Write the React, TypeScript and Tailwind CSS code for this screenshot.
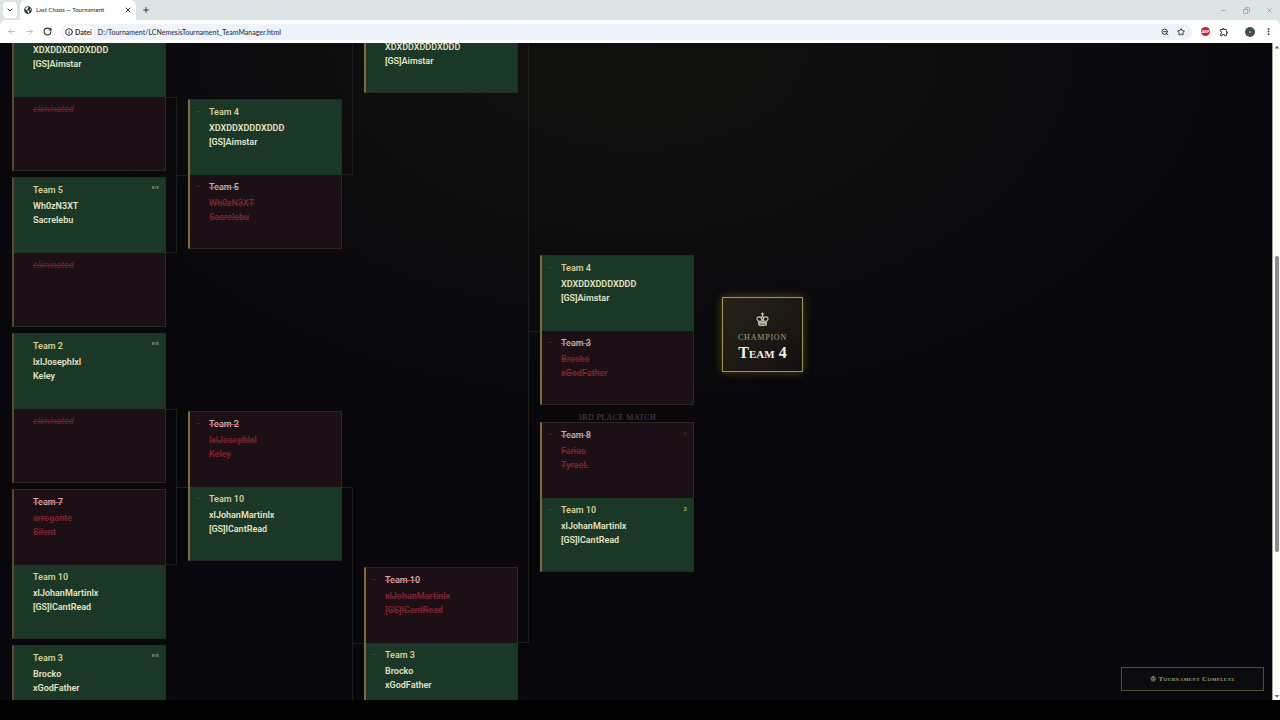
import {
  ArrowLeft,
  ArrowRight,
  ChevronDown,
  Copy,
  EllipsisVertical,
  Info,
  Minus,
  Plus,
  RotateCw,
  Star,
  X,
  ZoomOut,
} from "lucide-react";
import { FaCaretDown, FaCaretUp, FaGlobeAmericas } from "react-icons/fa";
import { MdOutlineExtension } from "react-icons/md";

interface Team {
  name?: string;
  players: string[];
  won: boolean;
  score?: string;
  seed?: boolean;
}

type MatchData = [Team, Team];

const out: Team = { players: [], won: false };
const empty: Team = { name: "", players: [], won: false };

const roundOne: MatchData[] = [
  [{ name: "", players: ["XDXDDXDDDXDDD", "[GS]Aimstar"], won: true }, out],
  [{ name: "Team 5", players: ["Wh0zN3XT", "Sacrelebu"], won: true, score: "BYE" }, out],
  [{ name: "Team 2", players: ["lxlJosephlxl", "Keley"], won: true, score: "BYE" }, out],
  [
    { name: "Team 7", players: ["arrogante", "Silent"], won: false },
    { name: "Team 10", players: ["xlJohanMartinlx", "[GS]lCantRead"], won: true },
  ],
  [{ name: "Team 3", players: ["Brocko", "xGodFather"], won: true, score: "BYE" }, empty],
];

const roundTwo: MatchData[] = [
  [
    { name: "Team 4", players: ["XDXDDXDDDXDDD", "[GS]Aimstar"], won: true, seed: true },
    { name: "Team 5", players: ["Wh0zN3XT", "Sacrelebu"], won: false, seed: true },
  ],
  [
    { name: "Team 2", players: ["lxlJosephlxl", "Keley"], won: false, seed: true },
    { name: "Team 10", players: ["xlJohanMartinlx", "[GS]lCantRead"], won: true, seed: true },
  ],
];

const semiFinals: MatchData[] = [
  [empty, { name: "", players: ["XDXDDXDDDXDDD", "[GS]Aimstar"], won: true }],
  [
    { name: "Team 10", players: ["xlJohanMartinlx", "[GS]lCantRead"], won: false, seed: true },
    { name: "Team 3", players: ["Brocko", "xGodFather"], won: true, seed: true },
  ],
];

const final: MatchData = [
  { name: "Team 4", players: ["XDXDDXDDDXDDD", "[GS]Aimstar"], won: true, seed: true },
  { name: "Team 3", players: ["Brocko", "xGodFather"], won: false, seed: true },
];

const thirdPlace: MatchData = [
  { name: "Team 8", players: ["Farias", "TyraeL"], won: false, score: "0", seed: true },
  { name: "Team 10", players: ["xlJohanMartinlx", "[GS]lCantRead"], won: true, score: "2", seed: true },
];

function TeamRow({ team }: { team: Team }) {
  return (
    <div
      className={`flex h-[75px] shrink-0 px-[6px] pt-[5px] ${
        team.won ? "bg-[#1b3728]" : "bg-[#1c0f15]"
      }`}
    >
      <div className="w-[13px] shrink-0 pt-[6px]">
        {team.seed && (
          <div className={`h-px w-1 ${team.won ? "bg-[#2c4a38]" : "bg-[#35252a]"}`} />
        )}
      </div>
      {team.name !== undefined ? (
        <div className="min-w-0 grow">
          <h3
            className={`h-[15px] text-[9px] leading-[15px] font-semibold ${
              team.won ? "text-[#d9cf91]" : "text-[#c3b3ad] line-through decoration-[#b4575a]"
            }`}
          >
            {team.name}
          </h3>
          <ul
            className={`mt-px text-[9px] leading-[14px] ${
              team.won
                ? "font-semibold text-[#e4e3c4]"
                : "font-medium text-[#84272f] line-through decoration-[#64202a]"
            }`}
          >
            {team.players.map((player) => (
              <li key={player}>{player}</li>
            ))}
          </ul>
        </div>
      ) : (
        <p className="grow text-[9px] leading-[15px] text-[#72222a] italic line-through">eliminated</p>
      )}
      {team.score && (
        <span
          className={`pt-[2px] font-bold ${
            team.score.length > 1
              ? "text-[4px] leading-[6px] text-[#7e9272]"
              : team.won
              ? "text-[6px] leading-2 text-[#a9b274]"
              : "text-[6px] leading-2 text-[#3a242a]"
          }`}
        >
          {team.score}
        </span>
      )}
    </div>
  );
}

function Match({ teams, bright }: { teams: MatchData; bright?: boolean }) {
  return (
    <article
      className={`flex h-[150px] w-[154px] shrink-0 flex-col overflow-hidden border border-l-2 border-[#29291f] ${
        bright ? "border-l-[#80693a]" : "border-l-[#574a2f]"
      }`}
    >
      <TeamRow team={teams[0]} />
      <TeamRow team={teams[1]} />
    </article>
  );
}

// Joins two matches on the left with the one they feed on the right
function Connector({ height }: { height: string }) {
  return (
    <div className={`flex w-full shrink-0 items-center ${height}`}>
      <div className="h-full w-1/2 border-y border-r border-[#1d1e19]" />
      <div className="h-px w-1/2 bg-[#1d1e19]" />
    </div>
  );
}

function Crown() {
  return (
    <svg viewBox="0 0 24 26" className="h-[14px] w-[13px]" fill="none" stroke="#cfccb8" strokeWidth="2">
      <path d="M12 1v7M9.5 3.5h5" />
      <path d="M12 17c-1-5-3-8-6-8s-5 2.500-4 5 3 3 3.500 4M12 17c1-5 3-8 6-8s5 2.500 4 5-3 3-3.500 4M12 17c-3-4-2-8 0-9 2 1 3 5 0 9" />
      <path d="M5 17.500c4-1.500 10-1.500 14 0V24c-4 1.200-10 1.200-14 0zM5 21c4-1.500 10-1.500 14 0" fill="#77745f" />
    </svg>
  );
}

function BrowserBar() {
  return (
    <header className="shrink-0 bg-[#dde4e6] font-[Lato,sans-serif] text-[#30343a]">
      <div className="flex h-5 items-center pl-[3px]">
        <button aria-label="Search tabs" className="flex h-4 w-[14px] items-center justify-center rounded bg-white">
          <ChevronDown size={8} strokeWidth={3} />
        </button>
        <div className="ml-[3px] flex h-full w-[116px] items-center rounded-t-md bg-white px-1">
          <FaGlobeAmericas size={8} className="shrink-0" />
          <span className="ml-1 grow text-[6px] leading-3 font-medium whitespace-nowrap">
            Last Chaos — Tournament
          </span>
          <button aria-label="Close tab">
            <X size={8} strokeWidth={3} />
          </button>
        </div>
        <button aria-label="New tab" className="ml-[6px]">
          <Plus size={8} strokeWidth={3} />
        </button>
        <div className="mr-[7px] ml-auto flex items-center gap-4 text-[#7d8386]">
          <button aria-label="Minimize">
            <Minus size={7} />
          </button>
          <button aria-label="Restore">
            <Copy size={7} className="-scale-x-100" />
          </button>
          <button aria-label="Close">
            <X size={7} />
          </button>
        </div>
      </div>
      <div className="flex h-[23px] items-center rounded-t-md bg-white px-[7px]">
        <div className="flex gap-[9px]">
          <button aria-label="Back" className="text-[#a6a9ac]">
            <ArrowLeft size={9} />
          </button>
          <button aria-label="Forward" className="text-[#a6a9ac]">
            <ArrowRight size={9} />
          </button>
          <button aria-label="Reload">
            <RotateCw size={9} strokeWidth={3} />
          </button>
        </div>
        <div className="ml-[9px] flex h-4 grow items-center rounded-full bg-[#eef3f9] pr-[7px] pl-[2px]">
          <span className="flex h-3 items-center gap-[2px] rounded-full bg-white px-[2px] text-[7px] leading-3 font-bold">
            <Info size={8} strokeWidth={3} />
            Datei
          </span>
          <input
            aria-label="Address"
            defaultValue="D:/Tournament/LCNemesisTournament_TeamManager.html"
            className="ml-1 min-w-0 grow bg-transparent text-[7px] leading-3 font-medium outline-none"
          />
          <div className="flex gap-2">
            <button aria-label="Zoom">
              <ZoomOut size={8} strokeWidth={3} />
            </button>
            <button aria-label="Bookmark">
              <Star size={8} strokeWidth={3} />
            </button>
          </div>
        </div>
        <div className="ml-[9px] flex items-center">
          <button
            aria-label="Ad blocker"
            className="flex size-[9px] items-center justify-center rounded-full bg-[#c8203f] text-[4px] leading-none font-bold text-white"
          >
            ABP
          </button>
          <button aria-label="Extensions" className="ml-[9px]">
            <MdOutlineExtension size={10} />
          </button>
          <button
            aria-label="Profile"
            className="ml-4 flex size-[10px] items-center justify-center rounded-full bg-[#3e5150]"
          >
            <span className="size-[2px] rounded-full bg-[#d6a24c]" />
          </button>
          <button aria-label="Menu" className="ml-[9px]">
            <EllipsisVertical size={9} strokeWidth={3} />
          </button>
        </div>
      </div>
    </header>
  );
}

export default function App() {
  return (
    <div className="flex h-screen flex-col overflow-hidden bg-black font-[Roboto,sans-serif]">
      <BrowserBar />

      <div className="mb-5 flex min-h-0 grow">
        <main className="relative flex min-w-0 grow items-start overflow-hidden bg-[#08080c] bg-radial-[ellipse_50%_60%_at_50%_0%] from-[#11110f] to-[#08080c] pl-3">
          <section aria-label="Round 1" className="-mt-[22px] flex flex-col gap-[6px]">
            {roundOne.map((teams, i) => (
              <Match key={i} teams={teams} />
            ))}
          </section>
          <div className="mt-[54px] flex w-[22px] shrink-0 flex-col gap-[156px]">
            <Connector height="h-[156px]" />
            <Connector height="h-[156px]" />
            <Connector height="h-[156px]" />
          </div>

          <section aria-label="Round 2" className="mt-14 flex flex-col gap-[162px]">
            {roundTwo.map((teams, i) => (
              <Match key={i} teams={teams} bright />
            ))}
          </section>
          <div className="-mt-[180px] flex w-[22px] shrink-0 flex-col gap-[312px]">
            <Connector height="h-[312px]" />
            <Connector height="h-[312px]" />
          </div>

          <section aria-label="Semifinals" className="-mt-[100px] flex flex-col gap-[474px]">
            {semiFinals.map((teams, i) => (
              <Match key={i} teams={teams} bright />
            ))}
          </section>
          <div className="-mt-6 flex w-[22px] shrink-0 flex-col">
            <Connector height="h-[624px]" />
          </div>

          <section aria-label="Final" className="mt-[212px] flex flex-col">
            <Match teams={final} bright />
            <h2 className="h-[17px] pt-2 text-center font-['Liberation_Serif',serif] text-[8px] leading-[10px] tracking-wider text-[#4a4943]">
              3RD PLACE MATCH
            </h2>
            <Match teams={thirdPlace} bright />
          </section>

          <section
            aria-label="Champion"
            className="mt-[254px] ml-7 flex h-[75px] w-[81px] shrink-0 flex-col items-center border border-[#a3935a] bg-linear-135 from-[#28221b] to-[#12100f] pt-[14px] font-['Liberation_Serif',serif] shadow-[0_0_8px_#7c6a2099]"
          >
            <Crown />
            <p className="mt-[7px] text-[8px] leading-[10px] tracking-widest text-[#aaa078]">CHAMPION</p>
            <p className="text-[16px] leading-5 font-bold text-[#f1efe4] [font-variant-caps:small-caps]">
              Team 4
            </p>
          </section>

          <div className="absolute right-2 bottom-[9px] flex h-6 w-[143px] items-center justify-center gap-[2px] border border-[#554d38] bg-[#0b0b0d] font-['Liberation_Serif',serif] text-[7px] leading-3 font-bold tracking-wider text-[#a0966f] [font-variant-caps:small-caps]">
            ♔ Tournament Complete
          </div>
        </main>

        <div className="flex w-2 shrink-0 flex-col items-center border-l border-[#a5a5a5] bg-[#fbfbfa] text-[#777777]">
          <FaCaretUp size={8} className="shrink-0" />
          <div className="grow-[205]" />
          <div className="h-[296px] w-1 shrink-0 rounded-full bg-[#8b8b8b]" />
          <div className="grow-[140]" />
          <FaCaretDown size={8} className="shrink-0" />
        </div>
      </div>
    </div>
  );
}
